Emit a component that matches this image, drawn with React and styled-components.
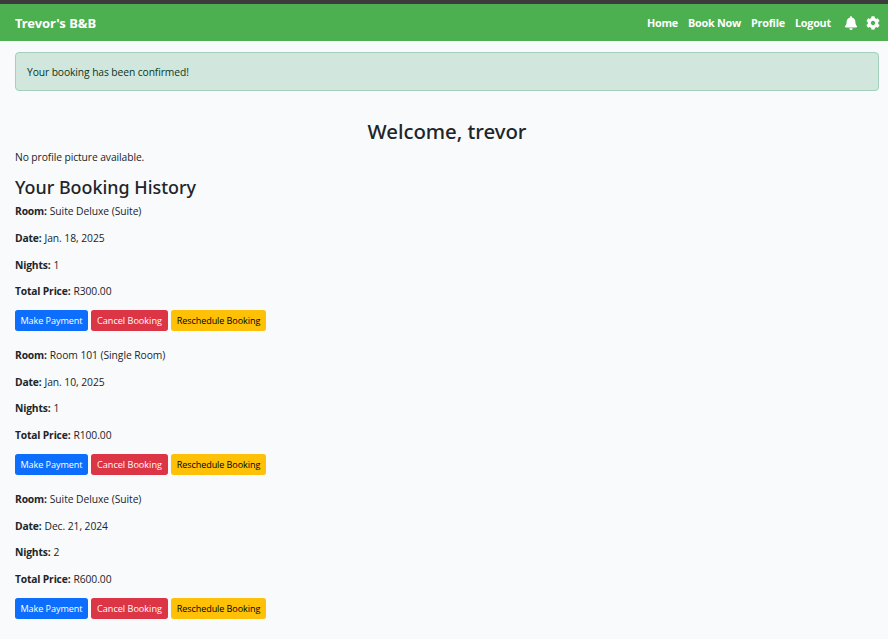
import React from "react";
import styled, { createGlobalStyle } from "styled-components";
import { FaBell, FaCog } from "react-icons/fa";

const GlobalStyle = createGlobalStyle`
  *, *::before, *::after { box-sizing: border-box; }
  body {
    margin: 0;
    background: #f8fafc;
    color: #212529;
    font-family: "Open Sans", "Noto Sans", sans-serif;
    font-size: 10.3px;
    line-height: 16px;
  }
  h2, h3, p { margin: 0; }
`;

const Page = styled.div`
  height: 639px;
  background: #f8fafc;
  border-top: 4px solid #3c3c3c;
  overflow: hidden;
`;

const Navbar = styled.nav`
  display: flex;
  align-items: center;
  justify-content: space-between;
  height: 37px;
  padding: 0 8px 0 15px;
  background: #4caf50;
  color: #fff;
  font-weight: 700;
`;

const Brand = styled.span`
  font-family: "Noto Sans", sans-serif;
  font-size: 13px;
  letter-spacing: -0.07px;
  line-height: 20px;
`;

const NavLinks = styled.div`
  display: flex;
  align-items: center;
`;

const NavLink = styled.a`
  width: ${(p) => p.$width}px;
  margin-right: 10px;
  font-size: 10.8px;
  letter-spacing: -0.24px;
  white-space: nowrap;
`;

const NavIcon = styled.span`
  display: flex;
  justify-content: center;
  width: 14px;
  margin-left: ${(p) => p.$gap}px;
`;

const Main = styled.main`
  padding: 11px 9px 0 15px;
`;

const Alert = styled.div`
  display: flex;
  align-items: center;
  height: 39px;
  margin-bottom: 27.5px;
  padding: 0 11px;
  border: 1px solid #a3cfbb;
  border-radius: 4px;
  background: #d1e7dd;
  color: #0a3622;
  letter-spacing: -0.1px;
`;

const Title = styled.h2`
  font-family: "Noto Sans", sans-serif;
  font-size: 20.4px;
  font-weight: 500;
  line-height: 25.6px;
  letter-spacing: -0.04px;
  text-align: center;
`;

const Note = styled.p`
  margin: 5.4px 0 10.67px;
  letter-spacing: -0.09px;
`;

const SectionTitle = styled.h3`
  margin-bottom: 4.8px;
  font-family: "Noto Sans", sans-serif;
  font-size: 17.9px;
  font-weight: 500;
  line-height: 22.4px;
`;

const Booking = styled.section`
  height: 143.8px;
`;

const Detail = styled.p`
  display: flex;
  gap: 3px;
  margin-bottom: 10.67px;
  letter-spacing: -0.06px;
`;

const Label = styled.strong`
  font-weight: 700;
  letter-spacing: -0.17px;
`;

const Actions = styled.div`
  display: flex;
  gap: 3px;
`;

const variants = {
  primary: { width: 73, bg: "#0d6efd", fg: "#fff", tracking: -0.08 },
  danger: { width: 77, bg: "#dc3545", fg: "#fff", tracking: 0 },
  warning: { width: 95, bg: "#ffc107", fg: "#000", tracking: -0.1 },
};

const Button = styled.button`
  width: ${(p) => variants[p.$variant].width}px;
  height: 21px;
  padding: 0;
  border: 0;
  border-radius: 2.67px;
  background: ${(p) => variants[p.$variant].bg};
  color: ${(p) => variants[p.$variant].fg};
  font-family: inherit;
  font-size: 9.1px;
  line-height: 21px;
  letter-spacing: ${(p) => variants[p.$variant].tracking}px;
  text-align: center;
  white-space: nowrap;
`;

const links = [
  { label: "Home", width: 31 },
  { label: "Book Now", width: 53 },
  { label: "Profile", width: 34 },
  { label: "Logout", width: 36 },
];

const bookings = [
  { room: "Suite Deluxe (Suite)", date: "Jan. 18, 2025", nights: 1, price: "R300.00" },
  { room: "Room 101 (Single Room)", date: "Jan. 10, 2025", nights: 1, price: "R100.00" },
  { room: "Suite Deluxe (Suite)", date: "Dec. 21, 2024", nights: 2, price: "R600.00" },
];

function BookingEntry({ booking }) {
  return (
    <Booking>
      <Detail><Label>Room:</Label> <span>{booking.room}</span></Detail>
      <Detail><Label>Date:</Label> <span>{booking.date}</span></Detail>
      <Detail><Label>Nights:</Label> <span>{booking.nights}</span></Detail>
      <Detail><Label>Total Price:</Label> <span>{booking.price}</span></Detail>
      <Actions>
        <Button $variant="primary">Make Payment</Button>
        <Button $variant="danger">Cancel Booking</Button>
        <Button $variant="warning">Reschedule Booking</Button>
      </Actions>
    </Booking>
  );
}

export default function App() {
  return (
    <Page>
      <GlobalStyle />
      <Navbar>
        <Brand>Trevor's B&amp;B</Brand>
        <NavLinks>
          {links.map((l) => (
            <NavLink key={l.label} $width={l.width}>{l.label}</NavLink>
          ))}
          <NavIcon $gap={3}><FaBell size={14} /></NavIcon>
          <NavIcon $gap={8}><FaCog size={14} /></NavIcon>
        </NavLinks>
      </Navbar>
      <Main>
        <Alert>Your booking has been confirmed!</Alert>
        <Title>Welcome, trevor</Title>
        <Note>No profile picture available.</Note>
        <SectionTitle>Your Booking History</SectionTitle>
        {bookings.map((b) => (
          <BookingEntry key={b.date} booking={b} />
        ))}
      </Main>
    </Page>
  );
}
